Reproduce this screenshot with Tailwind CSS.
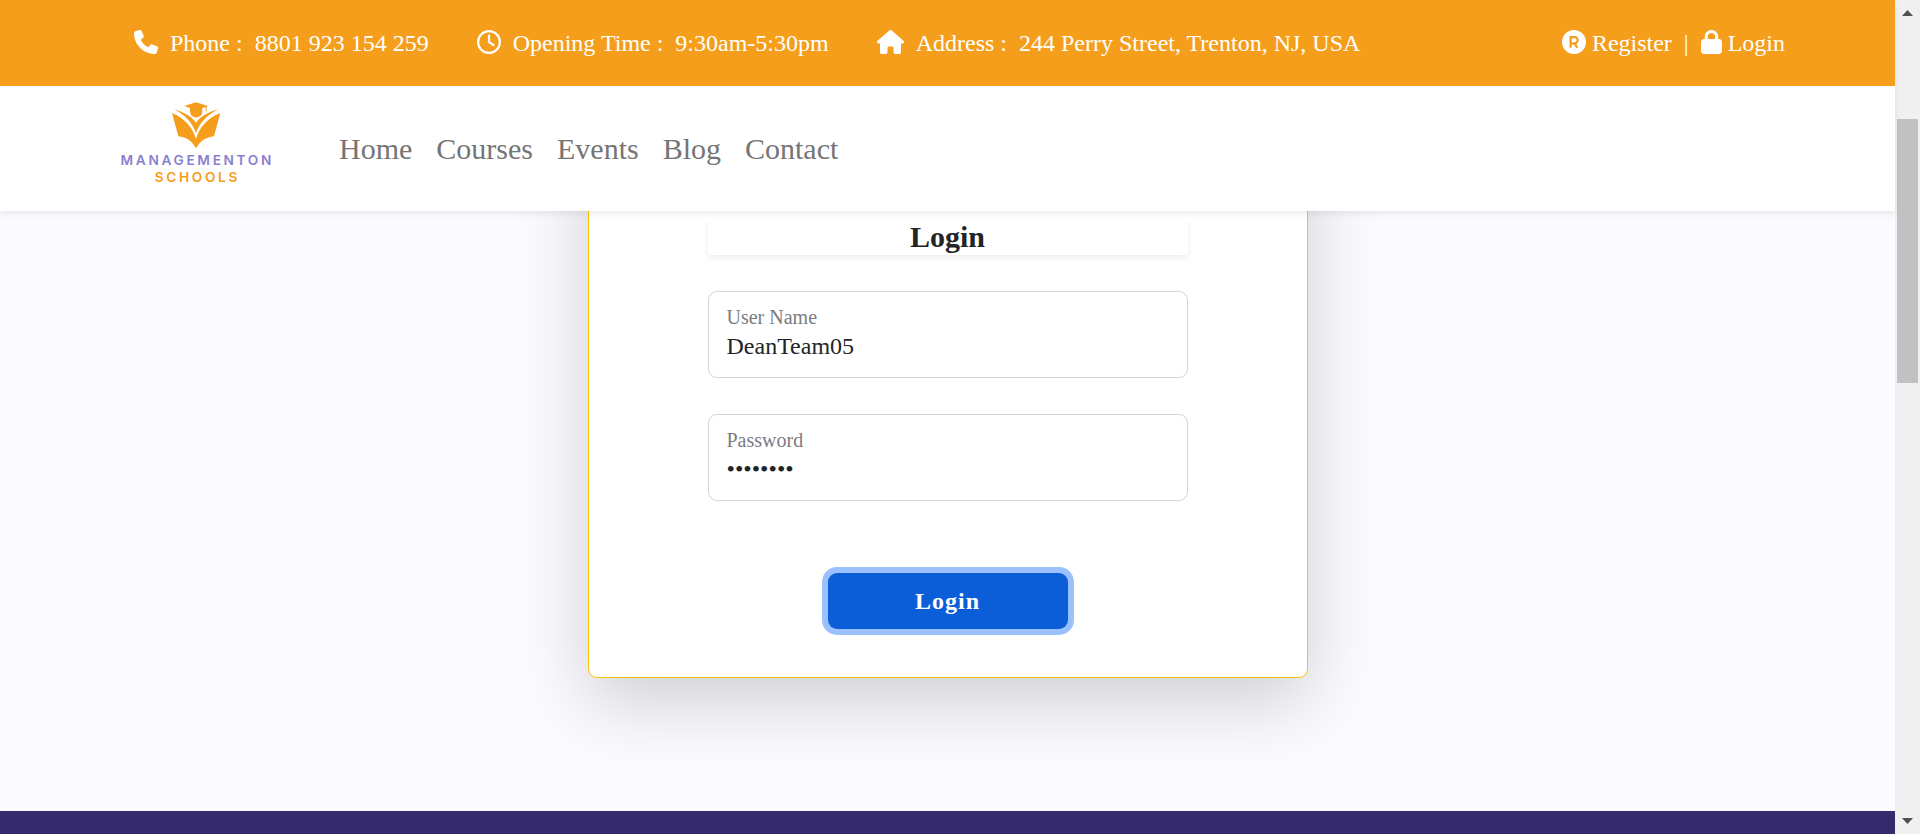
<!DOCTYPE html>
<html lang="en">
<head>
<meta charset="utf-8">
<meta name="viewport" content="width=device-width, initial-scale=1">
<title>Managementon Schools - Login</title>
<script src="https://cdn.jsdelivr.net/npm/@tailwindcss/browser@4"></script>
</head>
<body class="flex h-screen overflow-hidden bg-[#fbfaff] font-['Liberation_Serif',serif] text-2xl text-[#212529]">
<div class="flex min-w-0 flex-1 flex-col">
  <header class="relative z-10 shadow-[0_3px_6px_rgba(0,0,0,0.075)]">
    <div class="flex items-center justify-between bg-[#f59e1b] pt-[25px] pr-[110px] pb-[25px] pl-[134px] leading-9 whitespace-nowrap text-white">
      <ul class="flex items-center gap-12">
        <li class="flex items-center gap-3">
          <svg class="mb-0.5 size-6" viewBox="0 0 512 512" fill="currentColor" aria-hidden="true"><path d="M164.900 24.600c-7.700-18.600-28-28.500-47.400-23.200l-88 24C12.100 30.200 0 46 0 64C0 311.400 200.600 512 448 512c18 0 33.800-12.100 38.600-29.500l24-88c5.300-19.400-4.600-39.700-23.200-47.400l-96-40c-16.300-6.800-35.200-2.100-46.300 11.600L304.700 368C234.300 334.700 177.300 277.700 144 207.300L193.300 167c13.700-11.200 18.400-30 11.600-46.300l-40-96z"/></svg>
          <span>Phone :&nbsp; 8801 923 154 259</span>
        </li>
        <li class="flex items-center gap-3">
          <svg class="mb-0.5 size-6" viewBox="0 0 512 512" fill="currentColor" aria-hidden="true"><path d="M464 256A208 208 0 1 1 48 256a208 208 0 1 1 416 0zM0 256a256 256 0 1 0 512 0A256 256 0 1 0 0 256zM232 120V256c0 8 4 15.500 10.700 20l96 64c11 7.400 25.900 4.400 33.300-6.700s4.400-25.900-6.700-33.300L280 243.200V120c0-13.300-10.700-24-24-24s-24 10.700-24 24z"/></svg>
          <span>Opening Time :&nbsp; 9:30am-5:30pm</span>
        </li>
        <li class="flex items-center gap-3">
          <svg class="mb-0.5 h-6 w-[27px]" viewBox="0 0 576 512" fill="currentColor" aria-hidden="true"><path d="M575.800 255.500c0 18-15 32.100-32 32.100h-32l.700 160.200c0 2.700-.200 5.400-.500 8.100V472c0 22.100-17.900 40-40 40H456c-1.100 0-2.200 0-3.300-.100c-1.400 .100-2.800 .100-4.200 .100H416 392c-22.100 0-40-17.900-40-40V448 384c0-17.700-14.300-32-32-32H256c-17.700 0-32 14.300-32 32v64 24c0 22.100-17.900 40-40 40H160 128.100c-1.500 0-3-.100-4.500-.200c-1.200 .100-2.400 .200-3.600 .200H104c-22.100 0-40-17.900-40-40V360c0-.900 0-1.900 .100-2.800V287.600H32c-18 0-32-14-32-32.100c0-9 3-17 10-24L266.400 8c7-7 15-8 22-8s15 2 21 7L564.800 231.500c8 7 12 15 11 24z"/></svg>
          <span>Address :&nbsp; 244 Perry Street, Trenton, NJ, USA</span>
        </li>
      </ul>
      <div class="flex items-center gap-3">
        <a href="#register" class="flex items-center gap-1.5">
          <svg class="mb-0.5 size-6" viewBox="0 0 512 512" aria-hidden="true"><circle cx="256" cy="256" r="256" fill="currentColor"/><path d="M184 376V152h84a66 66 0 0 1 0 132h-84M262 284l66 92" fill="none" stroke="#f59e1b" stroke-width="46"/></svg>
          <span>Register</span>
        </a>
        <span>|</span>
        <a href="#login" class="flex items-center gap-1.5">
          <svg class="mb-0.5 h-6 w-[21px]" viewBox="0 0 448 512" fill="currentColor" aria-hidden="true"><path d="M144 144v48H304V144c0-44.200-35.800-80-80-80s-80 35.800-80 80zM80 192V144C80 64.500 144.500 0 224 0s144 64.500 144 144v48h16c35.300 0 64 28.700 64 64V448c0 35.300-28.700 64-64 64H64c-35.300 0-64-28.700-64-64V256c0-35.300 28.700-64 64-64H80z"/></svg>
          <span>Login</span>
        </a>
      </div>
    </div>
    <nav class="flex h-[125px] items-center gap-[58px] bg-white pl-[112px]" aria-label="Main">
      <a href="#" aria-label="Managementon Schools" class="mb-3.5">
        <svg class="h-[84px] w-[169px] overflow-visible" viewBox="6 30 507 252" fill="#f59e1b">
          <path d="M258 37L294 48L290 50V64H287V51L277 54V64A18.500 18.500 0 0 1 240 64V54L223 48Z"/>
          <path d="M192 58C220 66 244 78 258 98C272 78 296 66 325 58C298 72 272 92 258 129C244 92 220 72 192 58Z"/>
          <path d="M186 69C218 82 248 108 258 148C268 108 298 82 331 69L312 139C288 141 270 153 258 175C246 153 230 141 205 139Z"/>
          <text x="262" y="226" text-anchor="middle" class="fill-[#8b7fd0] font-[Inter,sans-serif] text-[41px] font-semibold tracking-[8px]">MANAGEMENTON</text>
          <text x="262" y="276" text-anchor="middle" class="font-[Inter,sans-serif] text-[41px] font-semibold tracking-[8px]">SCHOOLS</text>
        </svg>
      </a>
      <ul class="flex gap-6 text-3xl text-[#757575]">
        <li><a href="#home">Home</a></li>
        <li><a href="#courses">Courses</a></li>
        <li><a href="#events">Events</a></li>
        <li><a href="#blog">Blog</a></li>
        <li><a href="#contact">Contact</a></li>
      </ul>
    </nav>
  </header>

  <main class="-mt-32 flex justify-center pb-[133px]">
    <form class="flex w-full max-w-[720px] flex-col items-center rounded-[9px] border border-[#ffc107] bg-white px-[119px] pt-[135px] pb-12 shadow-[0_24px_72px_rgba(0,0,0,0.175)]">
      <h1 class="mb-9 w-full text-center text-3xl font-bold shadow-[0_3px_6px_rgba(0,0,0,0.075)]">Login</h1>
      <div class="mb-9 flex w-full flex-col rounded-[9px] border border-[#ced4da] px-[18px] pt-[13px] pb-3.5">
        <label for="username" class="text-xl leading-6 text-[#7a7c7f]">User Name</label>
        <input id="username" type="text" value="DeanTeam05" class="h-[34px] w-full bg-transparent outline-none">
      </div>
      <div class="mb-[72px] flex w-full flex-col rounded-[9px] border border-[#ced4da] px-[18px] pt-[13px] pb-3.5">
        <label for="password" class="text-xl leading-6 text-[#7a7c7f]">Password</label>
        <input id="password" type="password" value="password" class="h-[34px] w-full bg-transparent outline-none">
      </div>
      <button type="submit" class="h-14 w-60 rounded-[9px] bg-[#0b5ed7] font-bold tracking-[1px] text-white shadow-[0_0_0_6px_#9ac1fe]">Login</button>
    </form>
  </main>
  <footer class="grow bg-[#352a6b]"></footer>
</div>

<div class="flex w-[25px] shrink-0 flex-col items-center bg-[#f0f0f0]" aria-hidden="true">
  <svg class="mt-2.5 h-1.5 w-[11px]" viewBox="0 0 11 6" fill="#505050"><path d="M0 6L5.500 0L11 6Z"/></svg>
  <div class="mt-[103px] h-[264px] w-[21px] bg-[#c1c1c1]"></div>
  <svg class="mt-auto mb-2.5 h-1.5 w-[11px]" viewBox="0 0 11 6" fill="#505050"><path d="M0 0L5.500 6L11 0Z"/></svg>
</div>
</body>
</html>
